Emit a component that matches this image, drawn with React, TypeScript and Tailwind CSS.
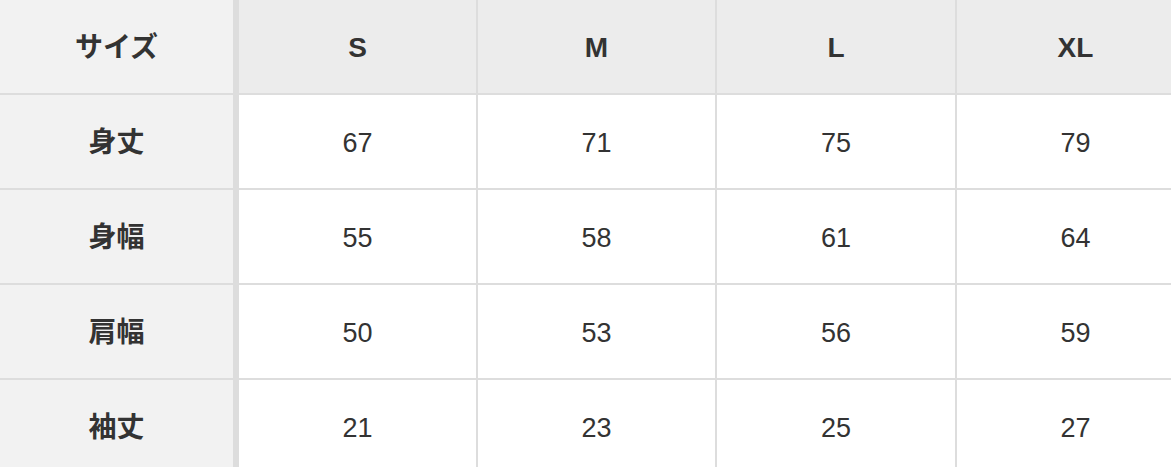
const sizes = ['S', 'M', 'L', 'XL'];

const rows = [
  { label: '身丈', values: [67, 71, 75, 79] },
  { label: '身幅', values: [55, 58, 61, 64] },
  { label: '肩幅', values: [50, 53, 56, 59] },
  { label: '袖丈', values: [21, 23, 25, 27] },
];

export default function App() {
  return (
    <div className="w-full h-[467px] overflow-hidden bg-white font-['Liberation_Sans','Noto_Sans_CJK_JP',sans-serif] text-[#333333]">
      <table className="w-[1194px] table-fixed border-separate border-spacing-0">
        <colgroup>
          <col className="w-[239px]" />
          <col className="w-[239px]" />
          <col className="w-[239px]" />
          <col className="w-[240px]" />
          <col className="w-[237px]" />
        </colgroup>
        <thead>
          <tr>
            <th className="h-[95px] pt-[2px] bg-[#f2f2f2] border-r-[6px] border-b-2 border-[#dddddd] text-[28px] font-bold">
              サイズ
            </th>
            {sizes.map((s, i) => (
              <th
                key={s}
                className={`h-[95px] pt-[2px] bg-[#ececec] border-b-2 border-[#dddddd] text-[28px] font-bold ${
                  i < sizes.length - 1 ? 'border-r-2' : ''
                }`}
              >
                {s}
              </th>
            ))}
          </tr>
        </thead>
        <tbody>
          {rows.map((row) => (
            <tr key={row.label}>
              <th className="h-[95px] pt-[3px] bg-[#f2f2f2] border-r-[6px] border-b-2 border-[#dddddd] text-[28px] font-bold">
                {row.label}
              </th>
              {row.values.map((v, i) => (
                <td
                  key={i}
                  className={`h-[95px] pt-[3px] bg-white border-b-2 border-[#dddddd] text-center text-[27px] ${
                    i < row.values.length - 1 ? 'border-r-2' : ''
                  }`}
                >
                  {v}
                </td>
              ))}
            </tr>
          ))}
        </tbody>
      </table>
    </div>
  );
}
